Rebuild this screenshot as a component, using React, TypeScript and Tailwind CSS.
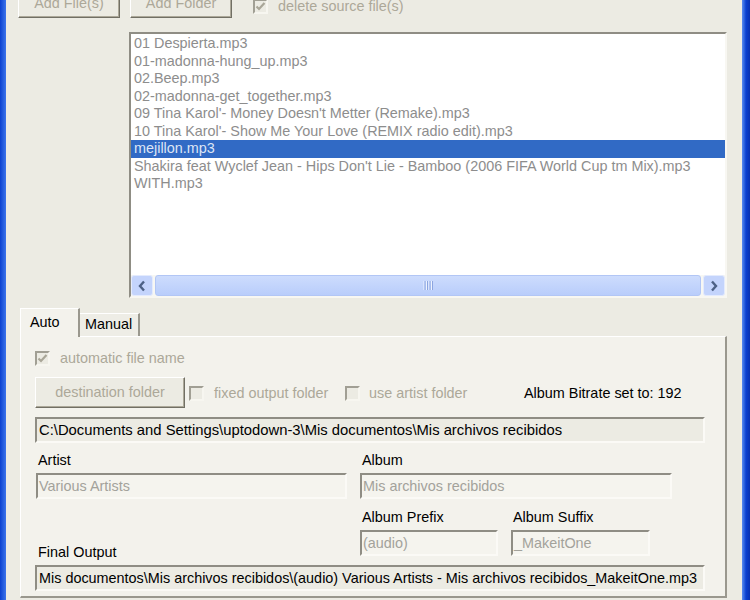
import React from 'react';

const files = [
  '01 Despierta.mp3',
  '01-madonna-hung_up.mp3',
  '02.Beep.mp3',
  '02-madonna-get_together.mp3',
  "09 Tina Karol'- Money Doesn't Metter (Remake).mp3",
  "10 Tina Karol'- Show Me Your Love (REMIX radio edit).mp3",
  'mejillon.mp3',
  "Shakira feat Wyclef Jean - Hips Don't Lie - Bamboo (2006 FIFA World Cup tm Mix).mp3",
  'WITH.mp3',
];

function Check({ checked }: { checked?: boolean }) {
  return (
    <div className="w-[15px] h-[15px] shrink-0 border-2 border-t-[#a19f94] border-l-[#a19f94] border-r-[#f7f6f0] border-b-[#f7f6f0] bg-[#ecebe3] flex items-center justify-center">
      {checked && (
        <svg width="11" height="11" viewBox="0 0 11 11">
          <path d="M1.5 5.5 L4 8 L9.5 2" fill="none" stroke="#a9a698" strokeWidth="2.2" />
        </svg>
      )}
    </div>
  );
}

function Button({ label, className }: { label: string; className: string }) {
  return (
    <div
      className={`${className} shrink-0 flex items-center justify-center border border-t-white border-l-white border-r-[#716f64] border-b-[#716f64] shadow-[inset_-1px_-1px_0_#aca899] bg-[#ecebe3] text-[#aca899]`}
    >
      {label}
    </div>
  );
}

function Field({ value, className, dim }: { value: string; className: string; dim?: boolean }) {
  return (
    <div
      className={`${className} h-[26px] shrink-0 flex items-center whitespace-nowrap overflow-hidden border-2 border-t-[#8f8d84] border-l-[#8f8d84] border-r-[#fbfaf6] border-b-[#fbfaf6] ${
        dim ? 'bg-[#f5f4ee] text-[#a3a29b] pl-[1px]' : 'bg-[#ecebe3] text-black pl-[2px]'
      }`}
    >
      {value}
    </div>
  );
}

function Arrow({ dir }: { dir: 'left' | 'right' }) {
  return (
    <div className="w-[22px] h-[21px] shrink-0 rounded-[3px] border border-[#e4ebfd] bg-[#c4d4fc] flex items-center justify-center">
      <svg width="10" height="12" viewBox="0 0 10 12">
        <path
          d={dir === 'left' ? 'M7 1.5 L3 6 L7 10.5' : 'M3 1.5 L7 6 L3 10.5'}
          fill="none"
          stroke="#4d6185"
          strokeWidth="2.4"
        />
      </svg>
    </div>
  );
}

export default function App() {
  return (
    <div className="w-[750px] h-[600px] overflow-hidden flex bg-[#ecebe3] text-[14.4px] leading-none font-['Liberation_Sans',Arial,sans-serif]">
      <div className="w-[6px] h-full shrink-0 bg-gradient-to-r from-[#0a3fd0] to-[#3d74eb]" />

      <div className="flex-1 flex flex-col">
        {/* top buttons */}
        <div className="flex items-center mt-[-12px] h-[30px] pl-[12px]">
          <Button label="Add File(s)" className="w-[102px] h-[30px]" />
          <Button label="Add Folder" className="w-[102px] h-[30px] ml-[10px]" />
          <div className="flex items-center ml-[21px] mt-[6px]">
            <Check checked />
            <span className="ml-[10px] text-[#aca899]">delete source file(s)</span>
          </div>
        </div>

        {/* file list */}
        <div className="ml-[123px] mt-[14px] w-[598px] h-[266px] flex flex-col border-2 border-t-[#8f8d84] border-l-[#8f8d84] border-r-[#f8f7f2] border-b-[#f8f7f2] bg-white">
          <div className="flex flex-col pt-[1px]">
            {files.map((f, i) => (
              <div
                key={f}
                className={`h-[17.5px] leading-[17.5px] pl-[3px] whitespace-nowrap ${
                  i === 6 ? 'bg-[#316ac5] text-[#dde5f5]' : 'text-[#8d8d8d]'
                }`}
              >
                {f}
              </div>
            ))}
          </div>
          <div className="flex-1" />
          <div className="h-[21px] flex items-center bg-[#f7f7f3]">
            <Arrow dir="left" />
            <div className="flex-1 h-[21px] mx-[2px] rounded-[3px] border border-[#b2c6f5] bg-gradient-to-b from-[#cddcfd] to-[#b9cdfb] flex items-center justify-center">
              <svg width="10" height="9" viewBox="0 0 10 9">
                <path d="M1 0v9M3.5 0v9M6 0v9M8.5 0v9" stroke="#eef3fe" strokeWidth="1" />
                <path d="M2 0v9M4.5 0v9M7 0v9M9.5 0v9" stroke="#8ca5e0" strokeWidth="1" />
              </svg>
            </div>
            <Arrow dir="right" />
          </div>
        </div>

        {/* tabs */}
        <div className="ml-[14px] mt-[10px] flex items-end h-[28px]">
          <div className="relative z-10 w-[60px] h-[29px] mb-[-1px] bg-[#f3f2ec] border-t border-l border-white border-r-2 border-r-[#9a988e] pl-[9px] pt-[6px] text-black">
            Auto
          </div>
          <div className="w-[60px] h-[23px] bg-[#eeede6] border-t border-white border-r-2 border-r-[#9a988e] pl-[5px] pt-[3px] text-black">
            Manual
          </div>
        </div>

        {/* panel */}
        <div className="ml-[14px] w-[707px] h-[262px] shrink-0 flex flex-col pl-[14px] bg-[#f3f2ec] border-t border-l border-white border-r-2 border-r-[#9a988e] border-b-2 border-b-[#9a988e]">
          <div className="flex items-center mt-[13px] h-[17px]">
            <Check checked />
            <span className="ml-[10px] text-[#aca899]">automatic file name</span>
          </div>

          <div className="flex items-center mt-[10px] h-[31px]">
            <Button label="destination folder" className="w-[150px] h-[31px]" />
            <div className="w-[160px] flex items-center pl-[4px] mt-[2px]">
              <Check />
              <span className="ml-[10px] text-[#aca899]">fixed output folder</span>
            </div>
            <div className="w-[175px] flex items-center mt-[2px]">
              <Check />
              <span className="ml-[9px] text-[#aca899]">use artist folder</span>
            </div>
            <span className="text-black mt-[2px] ml-[4px]">Album Bitrate set to: 192</span>
          </div>

          <Field
            value="C:\Documents and Settings\uptodown-3\Mis documentos\Mis archivos recibidos"
            className="w-[670px] mt-[9px] text-[14.8px]"
          />

          <div className="flex mt-[9px]">
            <div className="w-[325px] flex flex-col">
              <span className="h-[17px] pl-[3px] leading-[17px]">Artist</span>
              <Field value="Various Artists" dim className="w-[311px] ml-[1px] mt-[4px]" />
            </div>
            <div className="flex flex-col">
              <span className="h-[17px] pl-[2px] leading-[17px]">Album</span>
              <Field value="Mis archivos recibidos" dim className="w-[312px] mt-[4px]" />
            </div>
          </div>

          <div className="flex mt-[10px] pl-[325px]">
            <div className="flex flex-col">
              <span className="h-[17px] pl-[2px] leading-[17px]">Album Prefix</span>
              <Field value="(audio)" dim className="w-[138px] mt-[4px]" />
            </div>
            <div className="flex flex-col ml-[13px]">
              <span className="h-[17px] pl-[2px] leading-[17px]">Album Suffix</span>
              <Field value="_MakeitOne" dim className="w-[139px] mt-[4px]" />
            </div>
          </div>

          <span className="h-[17px] mt-[-12px] pl-[3px] leading-[17px] w-[200px]">Final Output</span>
          <Field
            value="Mis documentos\Mis archivos recibidos\(audio) Various Artists - Mis archivos recibidos_MakeitOne.mp3"
            className="w-[670px] mt-[4px]"
          />
        </div>
      </div>

      <div className="w-[8px] h-full shrink-0 bg-gradient-to-r from-[#5a8cf0] via-[#0a3fd0] to-[#0831b0]" />
    </div>
  );
}
